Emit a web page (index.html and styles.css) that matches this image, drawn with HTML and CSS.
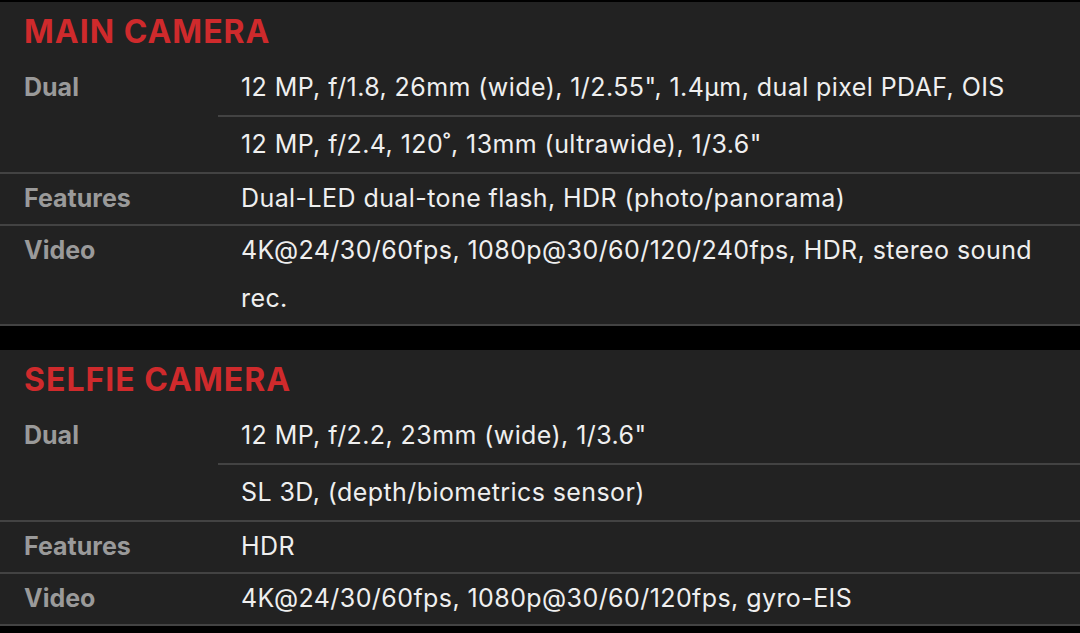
FILE: index.html
```html
<!DOCTYPE html>
<html lang="en">
<head>
<meta charset="utf-8">
<title>Camera specs</title>
<link rel="stylesheet" href="styles.css">
</head>
<body>
<section class="spec">
  <h2 class="spec-title">MAIN CAMERA</h2>
  <div class="spec-row spec-row--multi">
    <div class="spec-label">Dual</div>
    <div class="spec-values">
      <div class="spec-value">12 MP, f/1.8, 26mm (wide), 1/2.55", 1.4µm, dual pixel PDAF, OIS</div>
      <div class="spec-value">12 MP, f/2.4, 120˚, 13mm (ultrawide), 1/3.6"</div>
    </div>
  </div>
  <div class="spec-row">
    <div class="spec-label">Features</div>
    <div class="spec-values">
      <div class="spec-value">Dual-LED dual-tone flash, HDR (photo/panorama)</div>
    </div>
  </div>
  <div class="spec-row">
    <div class="spec-label">Video</div>
    <div class="spec-values">
      <div class="spec-value">4K@24/30/60fps, 1080p@30/60/120/240fps, HDR, stereo sound rec.</div>
    </div>
  </div>
</section>
<section class="spec">
  <h2 class="spec-title">SELFIE CAMERA</h2>
  <div class="spec-row spec-row--multi">
    <div class="spec-label">Dual</div>
    <div class="spec-values">
      <div class="spec-value">12 MP, f/2.2, 23mm (wide), 1/3.6"</div>
      <div class="spec-value">SL 3D, (depth/biometrics sensor)</div>
    </div>
  </div>
  <div class="spec-row">
    <div class="spec-label">Features</div>
    <div class="spec-values">
      <div class="spec-value">HDR</div>
    </div>
  </div>
  <div class="spec-row">
    <div class="spec-label">Video</div>
    <div class="spec-values">
      <div class="spec-value">4K@24/30/60fps, 1080p@30/60/120fps, gyro-EIS</div>
    </div>
  </div>
</section>
</body>
</html>
```
FILE: styles.css
```css
html, body {
  margin: 0;
  padding: 0;
  background: #000;
}
body {
  font-family: Inter, "Noto Sans", sans-serif;
  color: #ededed;
  padding-top: 2px;
}
.spec {
  background: #222222;
  margin-bottom: 24px;
}
.spec-title {
  margin: 0;
  padding: 10px 24px 8px;
  font-size: 32px;
  line-height: 40px;
  font-weight: 700;
  color: #cf2a2c;
  letter-spacing: 1px;
}
.spec-row {
  display: grid;
  grid-template-columns: 218px 1fr;
  border-bottom: 2px solid #434343;
}
.spec-label {
  padding-left: 24px;
  font-size: 25px;
  line-height: 48px;
  font-weight: 700;
  color: #9a9a9a;
}
.spec-value {
  padding: 0 24px 2px 23px;
  font-size: 25px;
  line-height: 48px;
  letter-spacing: 0.42px;
  color: #efefef;
}
.spec-row--multi .spec-label {
  padding-top: 3px;
}
.spec-row--multi .spec-value {
  padding-top: 3px;
  padding-bottom: 4px;
}
.spec-row--multi .spec-value + .spec-value {
  border-top: 2px solid #434343;
}
```
